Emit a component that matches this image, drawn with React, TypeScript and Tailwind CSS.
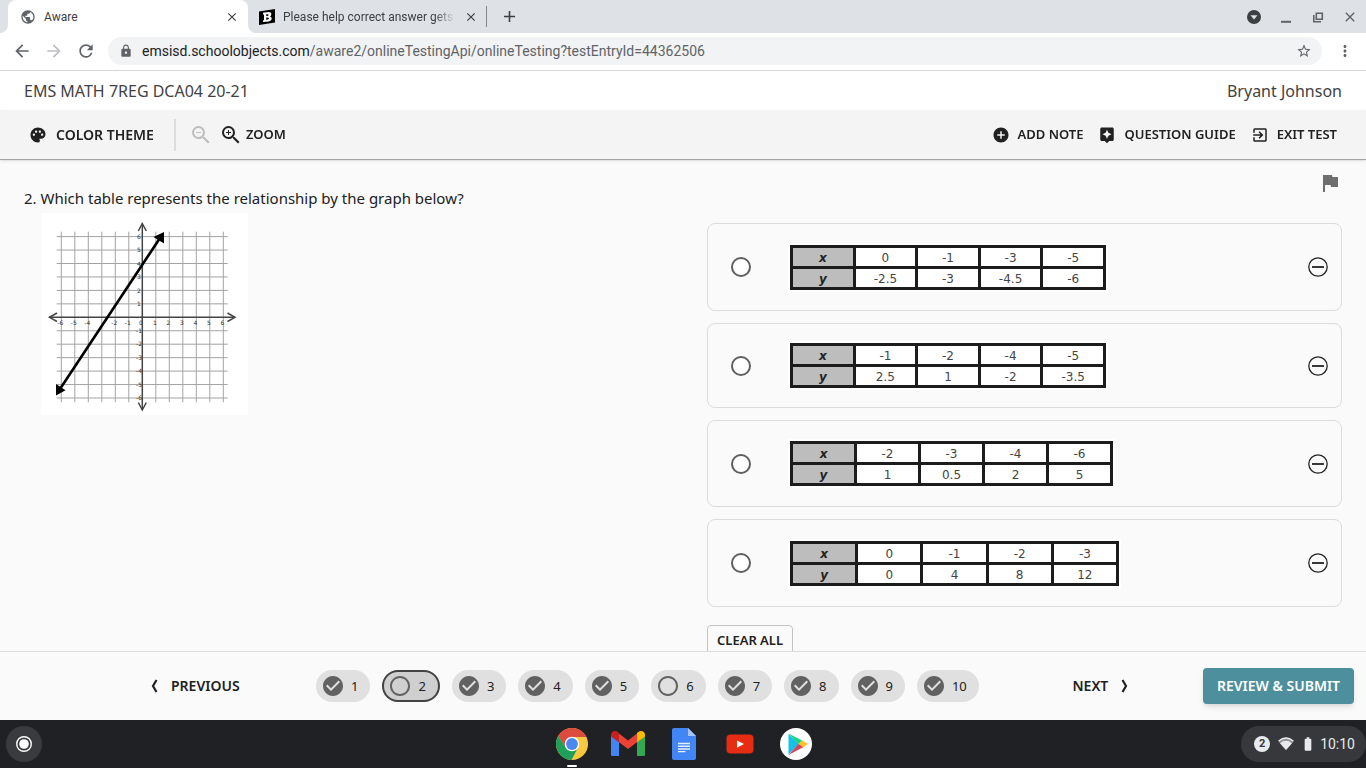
import React, { useState } from 'react';
import {
  MdAdd,
  MdAddCircle,
  MdArrowBack,
  MdArrowForward,
  MdAssistant,
  MdBatteryFull,
  MdCheckCircle,
  MdClose,
  MdExitToApp,
  MdFlag,
  MdLock,
  MdMoreVert,
  MdPalette,
  MdPublic,
  MdRadioButtonUnchecked,
  MdRefresh,
  MdStarBorder,
  MdZoomIn,
  MdZoomOut,
} from 'react-icons/md';

const answers = [
  { id: 'a', card: 'h-[88px]', table: 'w-[316px]', x: ['0', '-1', '-3', '-5'], y: ['-2.5', '-3', '-4.5', '-6'] },
  { id: 'b', card: 'h-[85px]', table: 'w-[316px]', x: ['-1', '-2', '-4', '-5'], y: ['2.5', '1', '-2', '-3.5'] },
  { id: 'c', card: 'h-[87px]', table: 'w-[323px]', x: ['-2', '-3', '-4', '-6'], y: ['1', '0.5', '2', '5'] },
  { id: 'd', card: 'h-[88px]', table: 'w-[329px]', x: ['0', '-1', '-2', '-3'], y: ['0', '4', '8', '12'] },
];

const questions = [1, 2, 3, 4, 5, 6, 7, 8, 9, 10];
const unanswered = [2, 6];

function BrowserTabs() {
  return (
    <div className="flex h-[33px] shrink-0 bg-[#dee1e6] text-xs text-[#3c4043]">
      <div className="w-2 bg-white">
        <div className="h-full rounded-br-lg bg-[#dee1e6]"></div>
      </div>
      <div className="flex w-60 items-center rounded-t-lg bg-white pl-3 pr-2">
        <MdPublic className="size-4 text-[#5f6368]" />
        <span className="ml-2 flex-1">Aware</span>
        <button aria-label="Close tab" className="flex size-4 items-center justify-center">
          <MdClose className="size-3.5" />
        </button>
      </div>
      <div className="w-2 bg-white">
        <div className="h-full rounded-bl-lg bg-[#dee1e6]"></div>
      </div>
      <div className="flex w-[230px] items-center pl-[3px] pr-[7px]">
        <svg viewBox="0 0 16 16" className="size-4">
          <path d="M0 2.500 16 0v13.500L0 16z" fill="#000" />
          <path d="M4 3.800 9.500 3q3 0 2.800 2.400 0 1.300-1.300 2 1.700.4 1.700 2.200 0 2.500-3.200 2.900L4 13v-1.600l1-.2V5.500l-1-.1z" fill="#fff" />
          <path d="M7.200 5.300v1.800q2.500.1 2.500-1.100 0-1.100-2.500-.7zM7.200 8.600v2.200q2.700 0 2.700-1.300 0-1.200-2.700-.9z" fill="#000" />
        </svg>
        <span className="ml-2 flex-1 overflow-hidden whitespace-nowrap [mask-image:linear-gradient(to_right,black_88%,transparent)]">
          Please help correct answer gets
        </span>
        <button aria-label="Close tab" className="ml-2 flex size-4 items-center justify-center">
          <MdClose className="size-3.5" />
        </button>
      </div>
      <div className="my-1.5 w-px bg-[#80868b]"></div>
      <button aria-label="New tab" className="ml-3 flex w-5 items-center justify-center">
        <MdAdd className="size-[19px]" />
      </button>
      <div className="ml-auto flex items-center gap-4 pr-2 text-[#5f6368]">
        <button aria-label="Search tabs">
          <svg viewBox="0 0 16 16" className="size-4">
            <circle cx="8" cy="8" r="7" fill="#3c4043" />
            <path d="M4.500 6.200h7L8 10.500z" fill="#dee1e6" />
          </svg>
        </button>
        <button aria-label="Minimize">
          <svg viewBox="0 0 16 16" className="size-4">
            <path d="M3 12.800h10" stroke="currentColor" strokeWidth="2" />
          </svg>
        </button>
        <button aria-label="Restore">
          <svg viewBox="0 0 16 16" className="size-4" fill="none" stroke="currentColor" strokeWidth="1.600">
            <path d="M6.300 4.300h6v6h-6z" />
            <path d="M3.800 6v6.800H11" />
          </svg>
        </button>
        <button aria-label="Close window">
          <MdClose className="size-4" />
        </button>
      </div>
    </div>
  );
}

function AddressBar() {
  return (
    <div className="flex h-[38px] shrink-0 items-center border-b border-[#d5d7da] bg-white px-3 pb-0.5 text-[#5f6368]">
      <button aria-label="Back">
        <MdArrowBack className="size-5" />
      </button>
      <button aria-label="Forward" className="ml-3 text-[#bcbec1]">
        <MdArrowForward className="size-5" />
      </button>
      <button aria-label="Reload" className="ml-3">
        <MdRefresh className="size-5" />
      </button>
      <div className="ml-3 flex h-7 flex-1 items-center rounded-full bg-[#f1f3f4] pl-[11px] pr-2.5">
        <MdLock className="size-3.5" />
        <span className="ml-[9px] flex-1 text-sm">
          <span className="text-[#202124]">emsisd.schoolobjects.com</span>
          /aware2/onlineTestingApi/onlineTesting?testEntryId=44362506
        </span>
        <button aria-label="Bookmark this page">
          <MdStarBorder className="size-4" />
        </button>
      </div>
      <button aria-label="Menu" className="ml-3.5">
        <MdMoreVert className="size-[18px]" />
      </button>
    </div>
  );
}

function Toolbar() {
  return (
    <div className="z-10 flex h-[50px] shrink-0 items-center border-b border-[#a5a5a5] bg-[#f4f4f4] px-[29px] pt-px text-[13px] font-semibold text-[#212121] shadow-sm">
      <button className="flex items-center gap-[9px] text-sm">
        <MdPalette className="size-[18px]" />
        COLOR THEME
      </button>
      <div className="ml-5 h-8 w-0.5 bg-[#dcdcdc]"></div>
      <button aria-label="Zoom out" className="ml-[13px] text-[#bdbdbd]">
        <MdZoomOut className="size-6" />
      </button>
      <button className="ml-1.5 flex items-center gap-[3px]">
        <MdZoomIn className="size-6" />
        ZOOM
      </button>
      <div className="ml-auto flex gap-[15px]">
        <button className="flex items-center gap-2">
          <MdAddCircle className="size-[18px]" />
          ADD NOTE
        </button>
        <button className="flex items-center gap-2">
          <MdAssistant className="size-[18px]" />
          QUESTION GUIDE
        </button>
        <button className="flex items-center gap-2">
          <MdExitToApp className="size-[18px]" />
          EXIT TEST
        </button>
      </div>
    </div>
  );
}

function Graph() {
  const steps = [-6, -5, -4, -3, -2, -1, 1, 2, 3, 4, 5, 6];
  return (
    <svg viewBox="0 0 207 202" className="ml-[17px] h-[202px] w-[207px] bg-white" role="img" aria-label="Line on a coordinate grid">
      <g stroke="#a3a3a3" strokeWidth="1">
        {steps.map((n) => (
          <path key={n} d={`M${101.3 + n * 13.5} 18.700V189.300M15.700 ${104.3 - n * 13.45}H186.700`} />
        ))}
      </g>
      <g stroke="#444" strokeWidth="1.500" fill="none">
        <path d="M8 104.300H194M101.300 10.500V197" />
        <path d="M16 100 8.500 104.300l7.500 4.200M186.500 100l7.500 4.300-7.500 4.200M97.300 18l4-7.500 4 7.500M97.300 189.500l4 7.500 4-7.500" />
      </g>
      <g fontSize="6" fontFamily="DejaVu Sans" fill="#333" textAnchor="middle">
        {steps.filter((n) => n !== -3).map((n) => (
          <text key={n} x={100.3 + n * 13.5} y="111.500">{n}</text>
        ))}
        {steps.map((n) => (
          <text key={n} x="98" y={106.5 - n * 13.45}>{n}</text>
        ))}
        <text x="100" y="111.500">0</text>
      </g>
      <path d="M19 176 119 25" stroke="#000" strokeWidth="2.600" />
      <path d="M15 182.500V171l9.500 6.300zM123 19v11.500L112.500 24z" fill="#000" />
    </svg>
  );
}

function AnswerTable({ id, width, x, y }: { id: string; width: string; x: string[]; y: string[] }) {
  return (
    <div className="bg-white p-0.5">
      <table
        id={id}
        className={`${width} table-fixed border-collapse border-[3px] border-[#1c1c1c] text-center font-['DejaVu_Sans',sans-serif] text-xs leading-4 text-[#444]`}
      >
        <tbody>
          <tr>
            <th scope="row" className="border-[3px] border-[#1c1c1c] bg-[#bdbdbd] p-0 pt-0.5 font-bold italic text-[#222]">x</th>
            {x.map((value, i) => (
              <td key={i} className="border-[3px] border-[#1c1c1c] p-0 pt-0.5">{value}</td>
            ))}
          </tr>
          <tr>
            <th scope="row" className="border-[3px] border-[#1c1c1c] bg-[#bdbdbd] p-0 pt-0.5 font-bold italic text-[#222]">y</th>
            {y.map((value, i) => (
              <td key={i} className="border-[3px] border-[#1c1c1c] p-0 pt-0.5">{value}</td>
            ))}
          </tr>
        </tbody>
      </table>
    </div>
  );
}

function Question() {
  const [selected, setSelected] = useState('');

  return (
    <main className="flex min-h-0 flex-1 overflow-y-auto bg-[#fafafa] px-6 [scrollbar-width:none]">
      <section className="flex-1 pt-[26px]">
        <p className="mb-[3px] text-[15px] leading-6 text-[#212121]">
          2. Which table represents the relationship by the graph below?
        </p>
        <Graph />
      </section>

      <section className="flex w-[635px] shrink-0 flex-col">
        <button aria-label="Flag question" className="mt-[11px] self-end text-[#6e6e6e]">
          <MdFlag className="size-6" />
        </button>
        <div className="mt-7 flex flex-col gap-3">
          {answers.map((answer) => (
            <div key={answer.id} className={`${answer.card} flex items-center rounded-lg border border-[#dcdcdc] pl-[23px] pr-[13px]`}>
              <input
                type="radio"
                name="answer"
                aria-labelledby={`table-${answer.id}`}
                checked={selected === answer.id}
                onChange={() => setSelected(answer.id)}
                className="mr-[37px] size-5 appearance-none rounded-full border-2 border-[#5f5f5f] bg-white checked:border-[6px]"
              />
              <AnswerTable id={`table-${answer.id}`} width={answer.table} x={answer.x} y={answer.y} />
              <button aria-label="Eliminate answer" className="ml-auto">
                <svg viewBox="0 0 20 20" className="size-5" fill="none" stroke="#222">
                  <circle cx="10" cy="10" r="9.200" strokeWidth="1.300" />
                  <path d="M4 10h12" strokeWidth="1.800" />
                </svg>
              </button>
            </div>
          ))}
        </div>
        <button
          onClick={() => setSelected('')}
          className="mt-[18px] h-8 shrink-0 self-start rounded border border-[#c4c4c4] px-[9px] text-[13px] font-semibold text-[#212121]"
        >
          CLEAR ALL
        </button>
      </section>
    </main>
  );
}

function Pager() {
  return (
    <footer className="flex h-[69px] shrink-0 items-center border-t border-[#d9dcdb] bg-[#fafafa] pl-[150px] pr-3 text-sm font-semibold text-[#212121]">
      <button className="flex w-[166px] items-center gap-3">
        <svg viewBox="0 0 9 14" className="h-3.5 w-[9px]">
          <path d="M6.500 1 3 7l3.500 6" fill="none" stroke="currentColor" strokeWidth="2.200" />
        </svg>
        PREVIOUS
      </button>
      <nav className="flex gap-3 text-[13px] font-normal">
        {questions.map((n) => (
          <button
            key={n}
            className={`flex h-8 items-center gap-1.5 rounded-full pr-3 ${
              n === 2 ? 'border-2 border-[#424242] bg-[#cfcfcf] pl-1' : 'bg-[#e0e0e0] pl-[5px]'
            }`}
          >
            {unanswered.includes(n) ? (
              <MdRadioButtonUnchecked className="size-6 text-[#616161]" />
            ) : (
              <MdCheckCircle className="size-6 text-[#616161]" />
            )}
            {n}
          </button>
        ))}
      </nav>
      <div className="flex flex-1 justify-center pl-5">
        <button className="flex items-center gap-3">
          NEXT
          <svg viewBox="0 0 9 14" className="h-3.5 w-[9px]">
            <path d="M2.500 1 6 7l-3.500 6" fill="none" stroke="currentColor" strokeWidth="2.200" />
          </svg>
        </button>
      </div>
      <button className="h-9 w-[151px] rounded bg-[#4d8f9d] text-white shadow-md">REVIEW &amp; SUBMIT</button>
    </footer>
  );
}

function Shelf() {
  return (
    <div className="grid h-12 shrink-0 grid-cols-[1fr_auto_1fr] items-center bg-[#202124]">
      <button aria-label="Launcher" className="ml-1.5 flex size-9 items-center justify-center rounded-full bg-[#3a3b3e]">
        <svg viewBox="0 0 18 18" className="size-[18px]">
          <circle cx="9" cy="9" r="7.300" fill="none" stroke="#fff" strokeWidth="1.400" />
          <circle cx="9" cy="9" r="4.800" fill="#fff" />
        </svg>
      </button>
      <div className="ml-0.5 flex gap-6">
        <button aria-label="Chrome" className="relative size-8">
          <svg viewBox="0 0 32 32" className="size-8">
            <circle cx="16" cy="16" r="16" fill="#fbc940" />
            <path d="M16 9H30.400A16 16 0 0 0 2.140 8L9.800 19.500z" fill="#dd4b3e" />
            <path d="M2.140 8A16 16 0 0 0 15.500 32L22.100 19.500 16 22.500 9.900 19.500z" fill="#1fa05a" />
            <circle cx="16" cy="16" r="7.300" fill="#fff" />
            <circle cx="16" cy="16" r="5.900" fill="#4a87ee" />
          </svg>
          <span className="absolute -bottom-[7px] left-[11px] h-0.5 w-2.5 rounded-full bg-white"></span>
        </button>
        <button aria-label="Gmail" className="size-8">
          <svg viewBox="0 0 32 32" className="size-8 overflow-visible">
            <path d="M-1 7v19.500q0 1.500 1.500 1.500H7V13z" fill="#4285f4" />
            <path d="M33 7v19.500q0 1.500-1.500 1.500H25V13z" fill="#34a853" />
            <path d="M7 5.500 16 12.500l9-7v8.700L16 21 7 14.200z" fill="#ea4335" />
            <path d="M-1 7C-1 3.500 3 1.800 6 4.200l1 .8v9.200L-1 8.500z" fill="#c5221f" />
            <path d="M33 7c0-3.500-4-5.200-7-2.800l-1 .8v9.200l8-5.700z" fill="#fbbc04" />
          </svg>
        </button>
        <button aria-label="Docs" className="size-8">
          <svg viewBox="0 0 32 32" className="size-8">
            <path d="M6 0h14l8 8v22q0 2-2 2H6q-2 0-2-2V2q0-2 2-2z" fill="#4285f4" />
            <path d="M20 0l8 8h-8z" fill="#a6c5fa" />
            <path d="M10 15.500h12M10 18.300h12M10 21h12M10 23.600h7.500" stroke="#e8f0fe" strokeWidth="1.400" />
          </svg>
        </button>
        <button aria-label="YouTube" className="size-8">
          <svg viewBox="0 0 32 32" className="size-8">
            <rect x="2.500" y="6.500" width="27" height="19" rx="4" fill="#e62c12" />
            <path d="M13 12.500v7.200l7-3.600z" fill="#fff" />
          </svg>
        </button>
        <button aria-label="Play Store" className="size-8">
          <svg viewBox="0 0 32 32" className="size-8">
            <circle cx="16" cy="16" r="16" fill="#fff" />
            <path d="M8.500 6v20.500L19 16z" fill="#16c1e8" />
            <path d="M8.500 5.500 23 13l-4 3.500z" fill="#10d488" />
            <path d="M22 12.300 28 16l-6 4-4-4z" fill="#fbc02d" />
            <path d="M8.500 27 23 19.300 18.500 16z" fill="#d8415c" />
          </svg>
        </button>
      </div>
      <div className="flex h-9 items-center justify-self-end rounded-full bg-[#37383b] pl-[13px] pr-[11px] text-sm text-[#e8eaed]">
        <span className="flex size-4 items-center justify-center rounded-full bg-[#e8eaed] text-[11px] font-bold text-[#37383b]">2</span>
        <svg viewBox="0 0 16 16" className="ml-2 size-4" fill="none">
          <path d="M0 5Q8-2 16 5L8 14z" fill="#8f9194" />
          <path d="M2 7.200Q8 2.500 14 7.200L8 14z" fill="#e8eaed" />
          <path d="M.7 5Q8-1 15.300 5" stroke="#e8eaed" strokeWidth="1.300" />
        </svg>
        <MdBatteryFull className="ml-1.5 size-4" />
        <span className="ml-1">10:10</span>
      </div>
    </div>
  );
}

export default function App() {
  return (
    <div className="flex h-screen min-w-[1280px] flex-col font-['Roboto',sans-serif]">
      <BrowserTabs />
      <AddressBar />
      <div className="flex min-h-0 flex-1 flex-col font-['Noto_Sans',sans-serif]">
        <header className="flex h-[39px] shrink-0 items-center justify-between bg-white px-6 text-base text-[#424242]">
          <h1>EMS MATH 7REG DCA04 20-21</h1>
          <span>Bryant Johnson</span>
        </header>
        <Toolbar />
        <Question />
        <Pager />
      </div>
      <Shelf />
    </div>
  );
}
